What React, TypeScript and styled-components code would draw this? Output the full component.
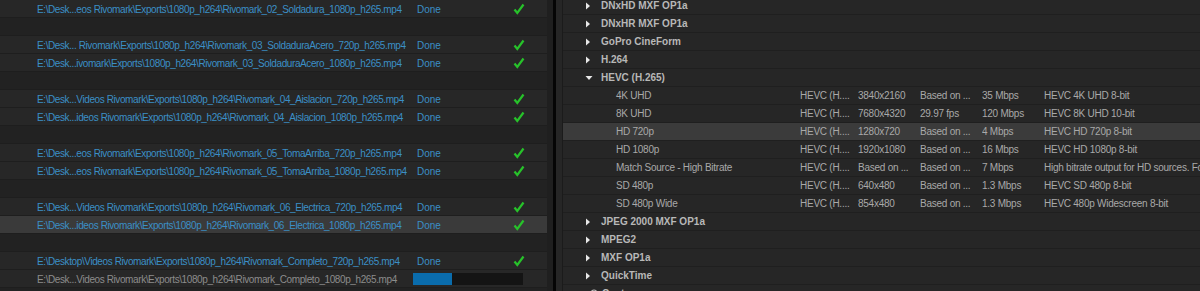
import React from 'react'
import styled, { createGlobalStyle } from 'styled-components'

const GlobalStyle = createGlobalStyle`
  html, body {
    margin: 0;
    padding: 0;
    background: #1a1a1a;
  }
  body {
    font-family: 'Liberation Sans', Arial, sans-serif;
    font-size: 10px;
    letter-spacing: -0.25px;
  }
`

const Screen = styled.div`
  display: flex;
  width: 1200px;
  height: 291px;
  overflow: hidden;
  background: #1a1a1a;
`

const QueuePanel = styled.div`
  width: 547px;
  display: flex;
  flex-direction: column;
  background: #232323;
`

const ScrollTrack = styled.div`
  width: 6px;
  background: #1f1f1f;
`

const Divider = styled.div`
  width: 3px;
  background: #050505;
`

const PresetPanel = styled.div`
  flex: 1;
  display: flex;
  background: #262626;
  min-width: 0;
`

const Gutter = styled.div`
  width: 6px;
  background: #262626;
  border-right: 1px solid #1b1b1b;
`

const PresetList = styled.div`
  flex: 1;
  display: flex;
  flex-direction: column;
  margin-top: -3px;
  min-width: 0;
`

const QueueRow = styled.div<{ $kind: 'item' | 'group'; $selected?: boolean }>`
  height: 16px;
  flex: none;
  display: grid;
  grid-template-columns: 376px 100px 1fr;
  align-items: center;
  padding: 1px 0 0 37px;
  border-bottom: 1px solid #1e1e1e;
  background: ${({ $kind, $selected }) => ($selected ? '#3a3a3a' : $kind === 'group' ? '#222222' : '#272727')};
  white-space: nowrap;
`

const Path = styled.span<{ $muted?: boolean }>`
  color: ${({ $muted }) => ($muted ? '#8c8c8c' : '#3b8fc6')};
  letter-spacing: -0.4px;
  overflow: hidden;
`

const Status = styled.span`
  color: #3b8fc6;
  padding-left: 4px;
  letter-spacing: 0;
`

const CheckCell = styled.span`
  display: flex;
  align-items: center;
`

const Progress = styled.div`
  width: 110px;
  height: 12px;
  display: flex;
  background-color: #141414;
  background-image: radial-gradient(#2a2a2a 0.6px, transparent 0.7px);
  background-size: 2px 2px;
`

const ProgressFill = styled.div`
  height: 100%;
  background: #0a6cac;
`

const PresetRow = styled.div<{ $selected?: boolean }>`
  height: 17px;
  flex: none;
  display: grid;
  grid-template-columns: 237px 58px 62px 62px 62px 1fr;
  align-items: center;
  border-bottom: 1px solid #1f1f1f;
  background: ${({ $selected }) => ($selected ? '#3b3b3b' : '#262626')};
  color: #a9a9a9;
  white-space: nowrap;
`

const CategoryName = styled.span<{ $indent?: number }>`
  display: flex;
  align-items: center;
  padding-left: ${({ $indent }) => $indent ?? 22}px;
  font-size: 10px;
  font-weight: 700;
  letter-spacing: 0;
  color: #b8b8b8;
`

const Twisty = styled.span`
  width: 16px;
  display: flex;
  align-items: center;
`

const FolderIcon = styled.span`
  width: 12px;
  display: flex;
  align-items: center;
`

const PresetName = styled.span`
  padding-left: 53px;
`

const Cell = styled.span`
  overflow: hidden;
`

const Check = () => (
  <svg width="12" height="12" viewBox="0 0 12 12">
    <path d="M1.5 6.5 L4.3 10 L10.5 1.5" fill="none" stroke="#27c22a" strokeWidth="2.2" strokeLinejoin="miter" />
  </svg>
)

const Arrow = ({ open, small }: { open?: boolean; small?: boolean }) =>
  open ? (
    <svg width="8" height="6" viewBox="0 0 8 6">
      <path d="M0.5 1 L7.5 1 L4 5 Z" fill="#e8e8e8" />
    </svg>
  ) : (
    <svg width={small ? 4 : 6} height={small ? 6 : 8} viewBox="0 0 6 8">
      <path d="M1 0.5 L5 4 L1 7.5 Z" fill={small ? '#9a9a9a' : '#e8e8e8'} />
    </svg>
  )

const PresetGroupIcon = () => (
  <svg width="10" height="10" viewBox="0 0 10 10">
    <circle cx="4" cy="4" r="3" fill="none" stroke="#b8b8b8" strokeWidth="1.2" />
    <path d="M6 6 L9 9" stroke="#b8b8b8" strokeWidth="1.2" />
  </svg>
)

type QueueItem =
  | { kind: 'group' }
  | { kind: 'item'; path: string; done?: boolean; progress?: number; selected?: boolean }

const queue: QueueItem[] = [
  { kind: 'item', path: 'E:\\Desk...eos Rivomark\\Exports\\1080p_h264\\Rivomark_02_Soldadura_1080p_h265.mp4', done: true },
  { kind: 'group' },
  { kind: 'item', path: 'E:\\Desk... Rivomark\\Exports\\1080p_h264\\Rivomark_03_SoldaduraAcero_720p_h265.mp4', done: true },
  { kind: 'item', path: 'E:\\Desk...ivomark\\Exports\\1080p_h264\\Rivomark_03_SoldaduraAcero_1080p_h265.mp4', done: true },
  { kind: 'group' },
  { kind: 'item', path: 'E:\\Desk...Videos Rivomark\\Exports\\1080p_h264\\Rivomark_04_Aislacion_720p_h265.mp4', done: true },
  { kind: 'item', path: 'E:\\Desk...ideos Rivomark\\Exports\\1080p_h264\\Rivomark_04_Aislacion_1080p_h265.mp4', done: true },
  { kind: 'group' },
  { kind: 'item', path: 'E:\\Desk...eos Rivomark\\Exports\\1080p_h264\\Rivomark_05_TomaArriba_720p_h265.mp4', done: true },
  { kind: 'item', path: 'E:\\Desk...eos Rivomark\\Exports\\1080p_h264\\Rivomark_05_TomaArriba_1080p_h265.mp4', done: true },
  { kind: 'group' },
  { kind: 'item', path: 'E:\\Desk...Videos Rivomark\\Exports\\1080p_h264\\Rivomark_06_Electrica_720p_h265.mp4', done: true },
  { kind: 'item', path: 'E:\\Desk...ideos Rivomark\\Exports\\1080p_h264\\Rivomark_06_Electrica_1080p_h265.mp4', done: true, selected: true },
  { kind: 'group' },
  { kind: 'item', path: 'E:\\Desktop\\Videos Rivomark\\Exports\\1080p_h264\\Rivomark_Completo_720p_h265.mp4', done: true },
  { kind: 'item', path: 'E:\\Desk...Videos Rivomark\\Exports\\1080p_h264\\Rivomark_Completo_1080p_h265.mp4', progress: 0.35 },
  { kind: 'group' },
]

type Preset =
  | { type: 'category'; name: string; open?: boolean }
  | { type: 'preset'; name: string; cols: string[]; selected?: boolean }

const presets: Preset[] = [
  { type: 'category', name: 'DNxHD MXF OP1a' },
  { type: 'category', name: 'DNxHR MXF OP1a' },
  { type: 'category', name: 'GoPro CineForm' },
  { type: 'category', name: 'H.264' },
  { type: 'category', name: 'HEVC (H.265)', open: true },
  { type: 'preset', name: '4K UHD', cols: ['HEVC (H....', '3840x2160', 'Based on ...', '35 Mbps', 'HEVC 4K UHD 8-bit'] },
  { type: 'preset', name: '8K UHD', cols: ['HEVC (H....', '7680x4320', '29.97 fps', '120 Mbps', 'HEVC 8K UHD 10-bit'] },
  { type: 'preset', name: 'HD 720p', cols: ['HEVC (H....', '1280x720', 'Based on ...', '4 Mbps', 'HEVC HD 720p 8-bit'], selected: true },
  { type: 'preset', name: 'HD 1080p', cols: ['HEVC (H....', '1920x1080', 'Based on ...', '16 Mbps', 'HEVC HD 1080p 8-bit'] },
  { type: 'preset', name: 'Match Source - High Bitrate', cols: ['HEVC (H....', 'Based on ...', 'Based on ...', '7 Mbps', 'High bitrate output for HD sources. For'] },
  { type: 'preset', name: 'SD 480p', cols: ['HEVC (H....', '640x480', 'Based on ...', '1.3 Mbps', 'HEVC SD 480p 8-bit'] },
  { type: 'preset', name: 'SD 480p Wide', cols: ['HEVC (H....', '854x480', 'Based on ...', '1.3 Mbps', 'HEVC 480p Widescreen 8-bit'] },
  { type: 'category', name: 'JPEG 2000 MXF OP1a' },
  { type: 'category', name: 'MPEG2' },
  { type: 'category', name: 'MXF OP1a' },
  { type: 'category', name: 'QuickTime' },
]

const App = () => {
  return (
    <Screen>
      <GlobalStyle />
      <QueuePanel>
        {queue.map((q, i) =>
          q.kind === 'group' ? (
            <QueueRow key={i} $kind="group" />
          ) : (
            <QueueRow key={i} $kind="item" $selected={q.selected}>
              <Path $muted={q.progress !== undefined}>{q.path}</Path>
              {q.progress !== undefined ? (
                <Progress>
                  <ProgressFill style={{ width: `${q.progress * 100}%` }} />
                </Progress>
              ) : (
                <Status>Done</Status>
              )}
              <CheckCell>{q.done && <Check />}</CheckCell>
            </QueueRow>
          )
        )}
      </QueuePanel>
      <ScrollTrack />
      <Divider />
      <PresetPanel>
        <Gutter />
        <PresetList>
          {presets.map((p, i) =>
            p.type === 'category' ? (
              <PresetRow key={i}>
                <CategoryName>
                  <Twisty>
                    <Arrow open={p.open} />
                  </Twisty>
                  {p.name}
                </CategoryName>
              </PresetRow>
            ) : (
              <PresetRow key={i} $selected={p.selected}>
                <PresetName>{p.name}</PresetName>
                {p.cols.map((c, j) => (
                  <Cell key={j}>{c}</Cell>
                ))}
              </PresetRow>
            )
          )}
          <PresetRow>
            <CategoryName $indent={11}>
              <Twisty>
                <Arrow small />
              </Twisty>
              <FolderIcon>
                <PresetGroupIcon />
              </FolderIcon>
              Custom
            </CategoryName>
          </PresetRow>
        </PresetList>
      </PresetPanel>
    </Screen>
  )
}

export default App
